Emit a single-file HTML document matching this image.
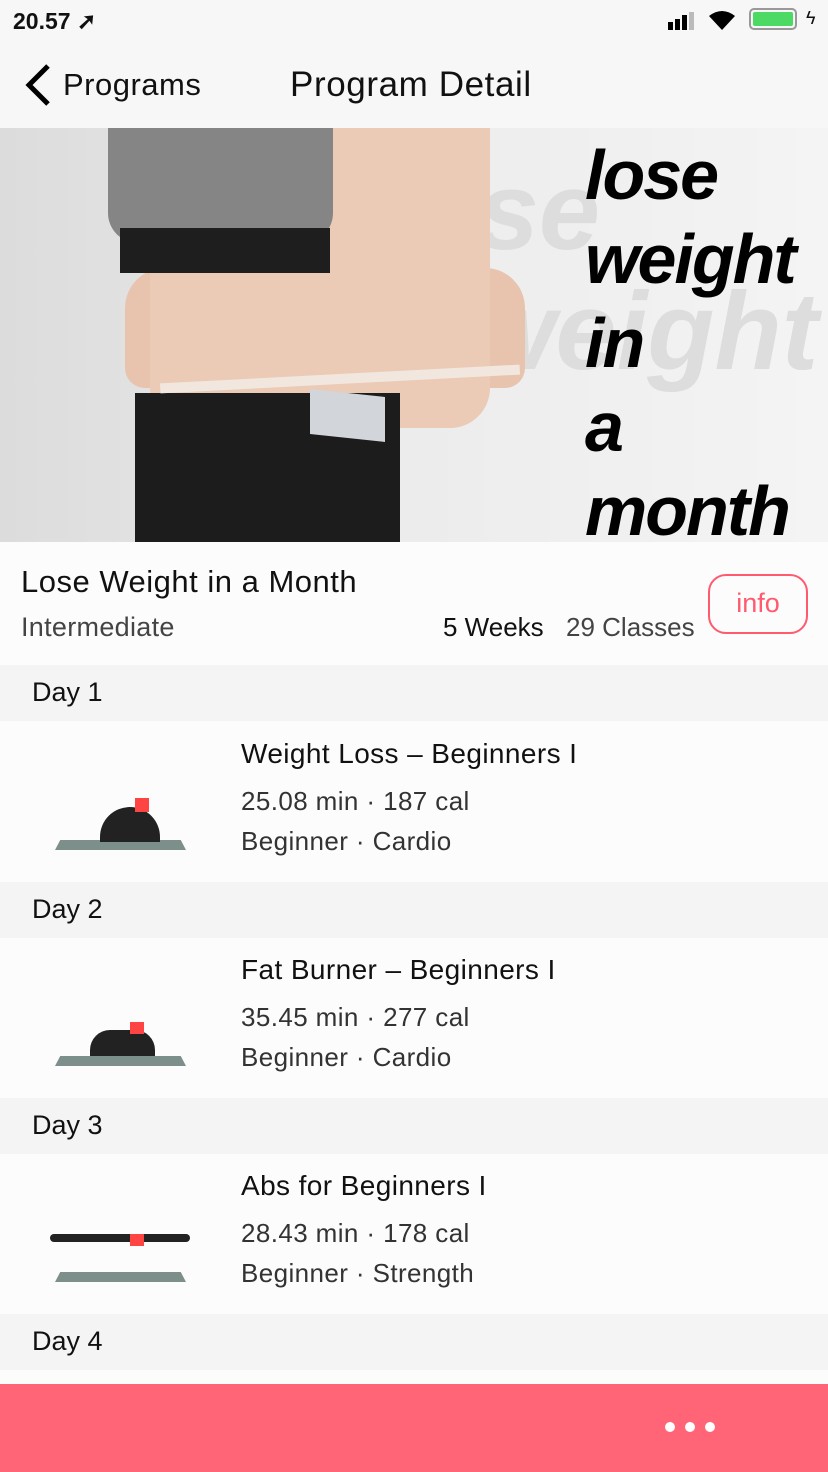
<!DOCTYPE html>
<html><head><meta charset="utf-8"><style>
*{margin:0;padding:0;box-sizing:border-box}
body{width:828px;height:1472px;overflow:hidden;background:#fcfcfc;font-family:"Liberation Sans",sans-serif;color:#111;position:relative}
.abs{position:absolute}
.day{position:absolute;left:0;width:828px;height:56px;background:#f4f4f4;font-size:27px;padding:12px 0 0 32px}
.item{position:absolute;left:0;width:828px;height:160px;background:#fcfcfc}
.item .t{position:absolute;left:241px;top:16px;font-size:28px;letter-spacing:0.4px}
.item .l{position:absolute;left:241px;font-size:26px;color:#333;letter-spacing:0.4px}
.mat{position:absolute;left:55px;top:118px;width:131px;height:10px;background:#7d8f8b;clip-path:polygon(4% 0,96% 0,100% 100%,0 100%)}
</style></head><body>
<div class="abs" style="left:0;top:0;width:828px;height:128px;background:#f7f7f7"></div>
<div class="abs" style="left:13px;top:8px;font-size:23px;font-weight:bold">20.57 ➚</div>
<div class="abs" style="left:668px;top:12px;width:36px;height:18px">
<div class="abs" style="left:0;top:10px;width:5px;height:8px;background:#000"></div>
<div class="abs" style="left:7px;top:7px;width:5px;height:11px;background:#000"></div>
<div class="abs" style="left:14px;top:3px;width:5px;height:15px;background:#000"></div>
<div class="abs" style="left:21px;top:0;width:5px;height:18px;background:#bbb"></div></div>
<svg class="abs" style="left:707px;top:8px" width="30" height="24"><path d="M2 8 Q15 -2 28 8 L15 22Z" fill="#000"/></svg>
<div class="abs" style="left:749px;top:8px;width:48px;height:22px;border:2px solid #999;border-radius:5px;padding:2px"><div style="width:100%;height:100%;background:#4cd964;border-radius:2px"></div></div>
<div class="abs" style="left:806px;top:8px;font-size:18px">ϟ</div>
<svg class="abs" style="left:24px;top:64px" width="30" height="42"><path d="M24 2 L5 21 L24 40" fill="none" stroke="#000" stroke-width="5"/></svg>
<div class="abs" style="left:63px;top:67px;font-size:31px;letter-spacing:0.5px">Programs</div>
<div class="abs" style="left:290px;top:65px;font-size:35px;letter-spacing:0.6px">Program Detail</div>
<div class="abs" style="left:0;top:128px;width:828px;height:414px;background:linear-gradient(90deg,#dcdcdc,#ececec 50%,#f4f4f4);overflow:hidden">
<div class="abs" style="left:380px;top:20px;font-size:110px;font-weight:bold;font-style:italic;color:#ddd">lose</div>
<div class="abs" style="left:470px;top:140px;font-size:110px;font-weight:bold;font-style:italic;color:#ddd">weight</div>
<div class="abs" style="left:125px;top:140px;width:400px;height:120px;background:#e8c4ae;border-radius:40px 40px 20px 20px"></div>
<div class="abs" style="left:150px;top:0;width:340px;height:300px;background:#ebcab6;border-radius:0 0 40px 40px"></div>
<div class="abs" style="left:108px;top:0;width:225px;height:115px;background:#858585;border-radius:0 0 30px 30px"></div>
<div class="abs" style="left:120px;top:100px;width:210px;height:45px;background:#1e1e1e"></div>
<div class="abs" style="left:135px;top:265px;width:265px;height:149px;background:#1c1c1c"></div>
<div class="abs" style="left:310px;top:265px;width:75px;height:45px;background:#d2d5d9;transform:skewY(6deg)"></div>
<div class="abs" style="left:160px;top:246px;width:360px;height:10px;background:#f1e7df;transform:rotate(-3deg)"></div>
<div class="abs" style="left:585px;top:5px;font-size:70px;font-weight:bold;font-style:italic;line-height:84px;color:#000;letter-spacing:-2px">lose<br>weight<br>in<br>a<br>month</div>
</div>
<div class="abs" style="left:21px;top:564px;font-size:31px;letter-spacing:0.5px">Lose Weight in a Month</div>
<div class="abs" style="left:21px;top:612px;font-size:27px;color:#444;letter-spacing:0.3px">Intermediate</div>
<div class="abs" style="left:443px;top:612px;font-size:26px">5 Weeks</div>
<div class="abs" style="left:566px;top:612px;font-size:26px;color:#444">29 Classes</div>
<div class="abs" style="left:708px;top:574px;width:100px;height:60px;border:2px solid #ff5a6e;border-radius:18px;color:#ff5a6e;font-size:27px;text-align:center;line-height:54px">info</div>
<div class="day" style="top:665px">Day 1</div>
<div class="item" style="top:722px"><div class="mat"></div><div class="abs" style="left:100px;top:85px;width:60px;height:35px;background:#222;border-radius:30px 30px 0 0"></div><div class="abs" style="left:135px;top:76px;width:14px;height:14px;background:#f44"></div>
<div class="t">Weight Loss – Beginners I</div><div class="l" style="top:64px">25.08 min · 187 cal</div><div class="l" style="top:104px">Beginner · Cardio</div></div>
<div class="day" style="top:882px">Day 2</div>
<div class="item" style="top:938px"><div class="mat"></div><div class="abs" style="left:90px;top:92px;width:65px;height:26px;background:#222;border-radius:20px 20px 0 0"></div><div class="abs" style="left:130px;top:84px;width:14px;height:12px;background:#f44"></div>
<div class="t">Fat Burner – Beginners I</div><div class="l" style="top:64px">35.45 min · 277 cal</div><div class="l" style="top:104px">Beginner · Cardio</div></div>
<div class="day" style="top:1098px">Day 3</div>
<div class="item" style="top:1154px"><div class="mat"></div><div class="abs" style="left:50px;top:80px;width:140px;height:8px;background:#222;border-radius:5px"></div><div class="abs" style="left:130px;top:80px;width:14px;height:12px;background:#f44"></div>
<div class="t">Abs for Beginners I</div><div class="l" style="top:64px">28.43 min · 178 cal</div><div class="l" style="top:104px">Beginner · Strength</div></div>
<div class="day" style="top:1314px">Day 4</div>
<div class="abs" style="left:0;top:1384px;width:828px;height:88px;background:#ff6577"></div>
<div class="abs" style="left:665px;top:1422px;width:10px;height:10px;border-radius:50%;background:#fff;box-shadow:20px 0 #fff,40px 0 #fff"></div>
</body></html>
